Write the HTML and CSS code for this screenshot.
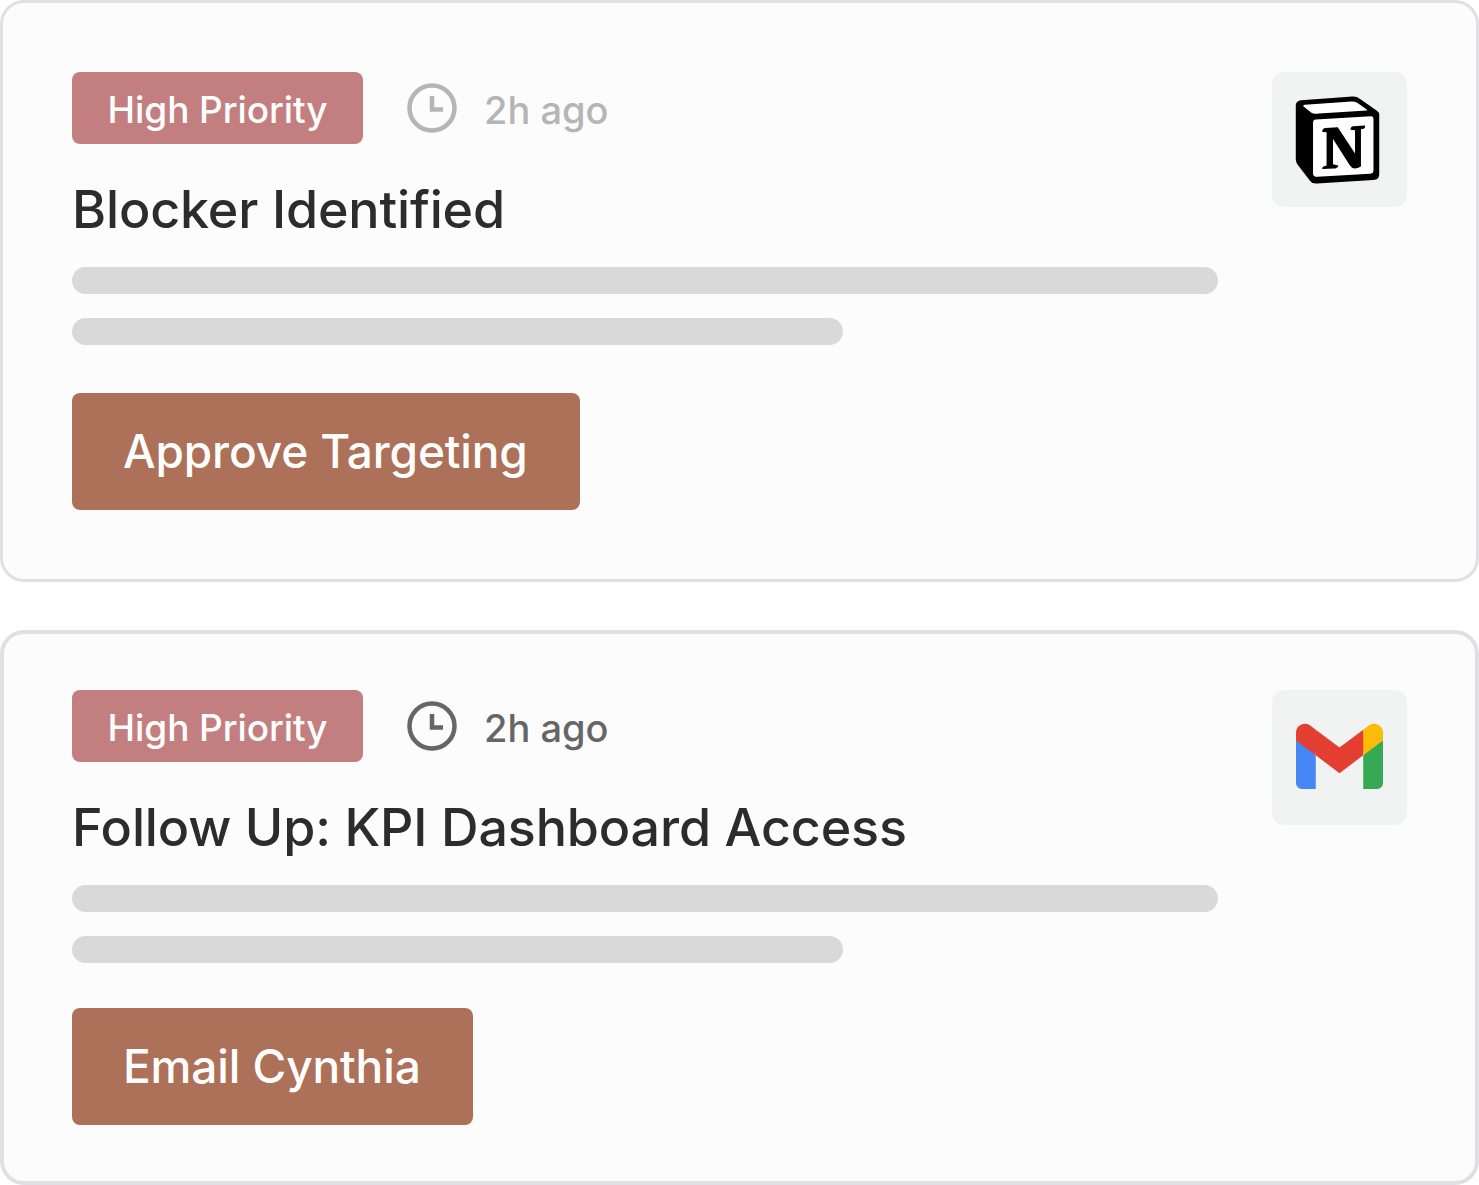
FILE: index.html
```html
<!DOCTYPE html>
<html>
<head>
    <title>Priority Tasks</title>
    <link rel="stylesheet" href="styles.css">
</head>
<body>
    <div class="card card-first">
        <div class="card-main">
            <div class="meta">
                <span class="badge">High Priority</span>
                <svg class="clock" viewBox="0 0 50 50"><circle cx="25" cy="25" r="22.5"/><path d="M25 13v13.500h11"/></svg>
                <span class="time">2h ago</span>
            </div>
            <h2 class="title">Blocker Identified</h2>
            <div class="bar bar-long"></div>
            <div class="bar bar-short"></div>
            <button class="action">Approve Targeting</button>
        </div>
        <div class="app-icon">
            <svg class="notion" viewBox="0 0 24 24">
                <path fill="#fff" d="M1 2l15-1 6.500 4.500v17l-16.500 1-5-6z"/>
                <path fill="#000" d="M4.459 4.208c.746.606 1.026.56 2.428.466l13.215-.793c.28 0 .047-.28-.046-.326L17.860 1.968c-.42-.326-.981-.7-2.055-.607L3.010 2.295c-.466.046-.56.28-.374.466zm.793 3.080v13.904c0 .747.373 1.027 1.214.98l14.523-.84c.841-.046.935-.56.935-1.167V6.354c0-.606-.233-.933-.748-.887l-15.177.887c-.56.047-.747.327-.747.933zm14.337.745c.093.42 0 .84-.42.888l-.7.14v10.264c-.608.327-1.168.514-1.635.514-.748 0-.935-.234-1.495-.933l-4.577-7.186v6.952L12.210 19s0 .84-1.168.84l-3.222.186c-.093-.186 0-.653.327-.746l.84-.233V9.854L7.822 9.760c-.094-.42.14-1.026.793-1.073l3.456-.233 4.764 7.279v-6.440l-1.215-.139c-.093-.514.28-.887.747-.933zM1.936 1.035l13.310-.98c1.634-.14 2.055-.047 3.082.7l4.249 2.986c.7.513.934.653.934 1.213v16.378c0 1.026-.373 1.634-1.680 1.726l-15.458.934c-.98.047-1.448-.093-1.962-.747l-3.129-4.060c-.56-.747-.793-1.306-.793-1.960V2.667c0-.839.374-1.540 1.447-1.632z"/>
            </svg>
        </div>
    </div>

    <div class="card card-second">
        <div class="card-main">
            <div class="meta meta-dark">
                <span class="badge">High Priority</span>
                <svg class="clock" viewBox="0 0 50 50"><circle cx="25" cy="25" r="22.500"/><path d="M25 13v13.500h11"/></svg>
                <span class="time">2h ago</span>
            </div>
            <h2 class="title">Follow Up: KPI Dashboard Access</h2>
            <div class="bar bar-long"></div>
            <div class="bar bar-short"></div>
            <button class="action">Email Cynthia</button>
        </div>
        <div class="app-icon">
            <svg class="gmail" viewBox="0 0 256 193">
                <path fill="#4787f5" d="M58.182 192.050V93.140L27.507 65.077 0 49.504v125.091c0 9.658 7.825 17.455 17.455 17.455h40.727z"/>
                <path fill="#37a854" d="M197.818 192.050h40.727c9.659 0 17.455-7.826 17.455-17.455V49.505l-31.156 17.837-27.026 25.798v98.910z"/>
                <path fill="#e33e2f" d="M58.182 93.140l-4.174-38.647 4.174-36.989L128 69.868l69.818-52.364 4.669 34.992-4.669 40.644L128 145.504z"/>
                <path fill="#fbbc07" d="M197.818 17.504V93.140L256 49.504V26.231c0-21.585-24.640-33.890-41.890-20.945l-16.292 12.218z"/>
                <path fill="#e33e2f" d="M0 49.504l26.759 20.070L58.182 93.140V17.504L41.890 5.286C24.610-7.660 0 4.646 0 26.230v23.273z"/>
            </svg>
        </div>
    </div>
</body>
</html>
```

FILE: styles.css
```css
body {
    margin: 0;
    background-color: #fff;
    font-family: Inter, "Liberation Sans", sans-serif;
}
.card {
    display: flex;
    justify-content: space-between;
    align-items: flex-start;
    box-sizing: border-box;
    background-color: #fcfcfc;
    border: 3px solid #e0e0e2;
    border-radius: 24px;
    padding: 69px;
}
.card-first {
    height: 582px;
    margin-bottom: 48px;
}
.card-second {
    height: 555px;
    border-width: 4px;
    padding: 56px 68px;
}
.card-main {
    width: 1146px;
}
.meta {
    display: flex;
    align-items: center;
    height: 72px;
    color: #b5b5b5;
}
.meta-dark {
    color: #666;
}
.badge {
    width: 291px;
    height: 72px;
    line-height: 75px;
    text-align: center;
    background-color: #c37f7f;
    color: #fff;
    border-radius: 8px;
    font-size: 37px;
    font-weight: 450;
    letter-spacing: -0.08px;
}
.clock {
    width: 50px;
    height: 50px;
    margin: 0 27px 0 44px;
    fill: none;
    stroke: currentColor;
    stroke-width: 4.5;
}
.time {
    padding-top: 3px;
    font-size: 38px;
    font-weight: 450;
}
.title {
    margin: 36px 0 27px;
    height: 60px;
    line-height: 60px;
    font-size: 52px;
    font-weight: 500;
    color: #2c2c2c;
    letter-spacing: -0.15px;
}
.bar {
    height: 27px;
    border-radius: 14px;
    background-color: #d9d9d9;
    margin-bottom: 24px;
}
.bar-long {
    width: 1146px;
}
.bar-short {
    width: 771px;
}
.action {
    display: block;
    height: 117px;
    margin-top: 48px;
    padding: 0 52px 1px 51px;
    border: none;
    border-radius: 8px;
    background-color: #ad7059;
    color: #fff;
    font-family: inherit;
    font-size: 46px;
    font-weight: 450;
    letter-spacing: -0.12px;
}
.card-second .action {
    margin-top: 45px;
}
.app-icon {
    display: flex;
    align-items: center;
    justify-content: center;
    width: 135px;
    height: 135px;
    border-radius: 12px;
    background-color: #f1f3f3;
}
.notion {
    width: 87px;
    height: 88px;
    margin-right: 4px;
}
.gmail {
    width: 87px;
    height: 67px;
    margin-bottom: 2px;
}
```
